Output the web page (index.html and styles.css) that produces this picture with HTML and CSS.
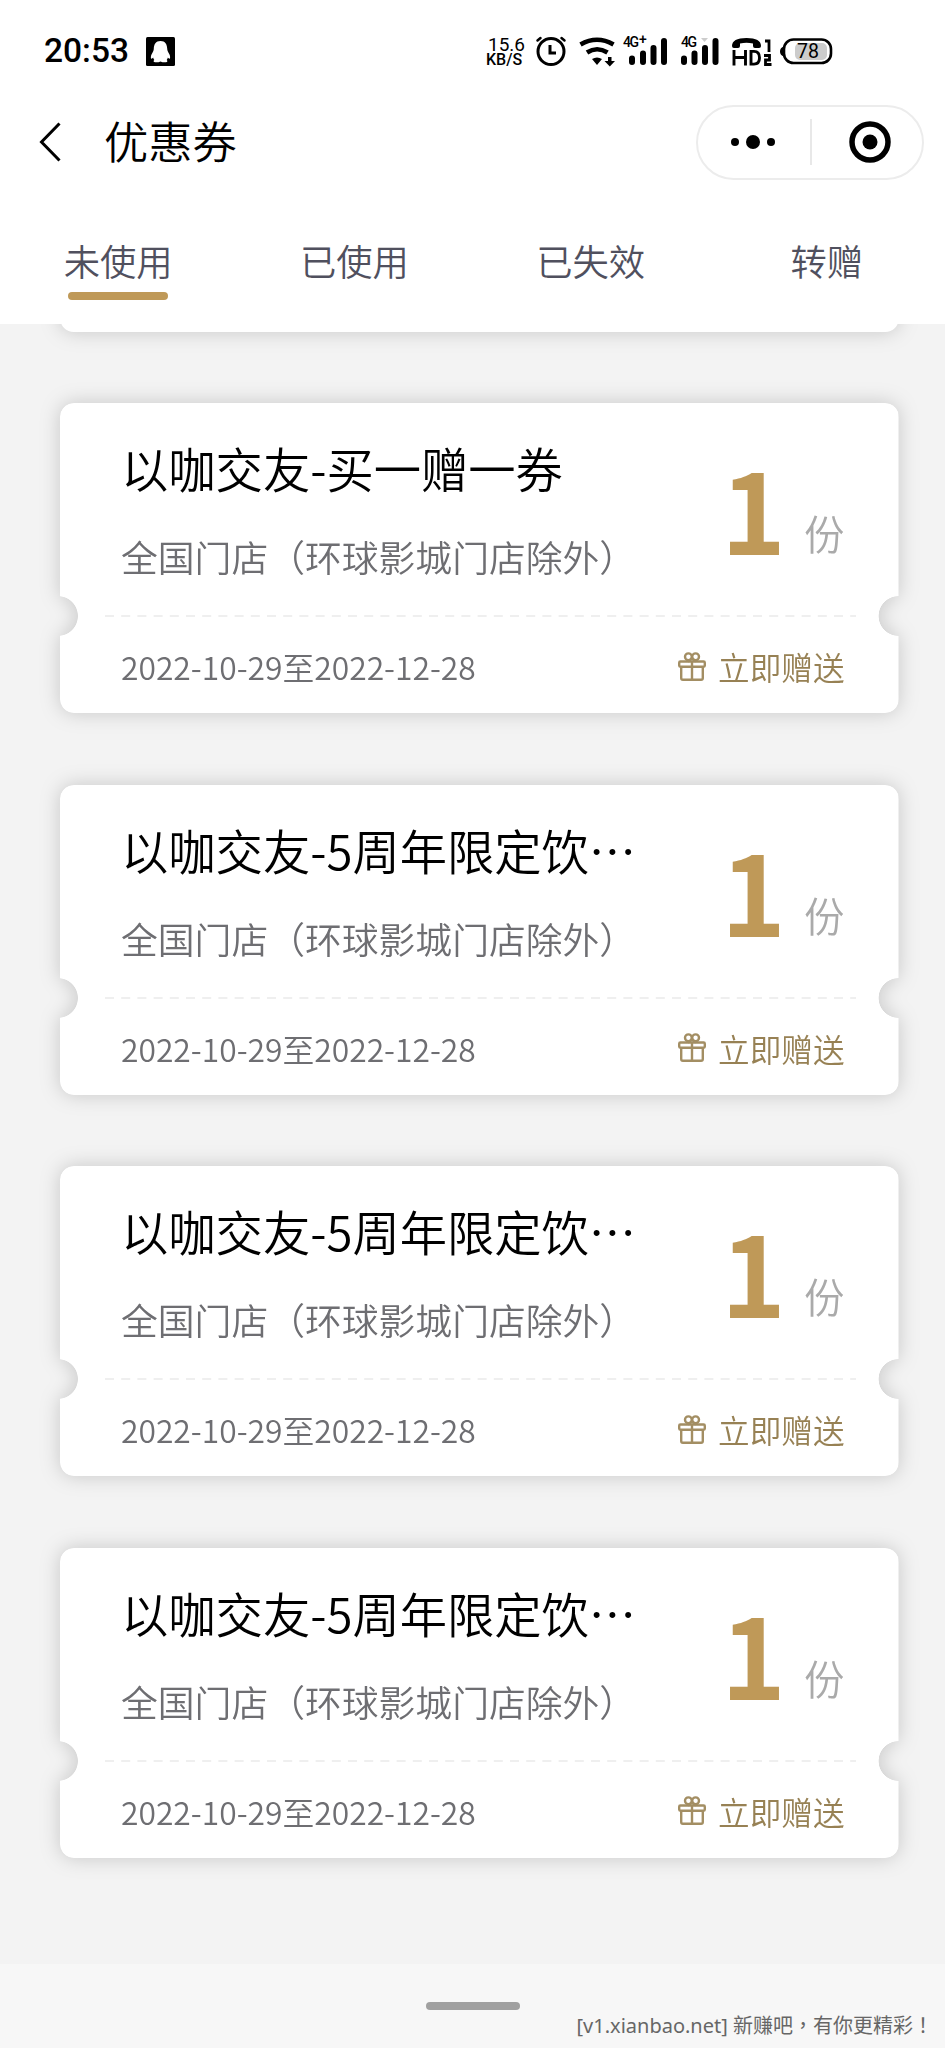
FILE: index.html
```html
<!DOCTYPE html>
<html lang="zh-CN">
<head>
<meta charset="utf-8">
<title>优惠券</title>
<link rel="stylesheet" href="styles.css">
</head>
<body>
<svg class="defs" width="0" height="0" aria-hidden="true">
  <symbol id="gift" viewBox="0 0 28 29">
    <g fill="none" stroke="#a38e63" stroke-width="2.4" stroke-linejoin="round">
      <rect x="1.2" y="9.5" width="25.600" height="5.200" rx="1.200"/>
      <path d="M3.200 14.700V26a1.700 1.700 0 0 0 1.700 1.700h18.200a1.700 1.700 0 0 0 1.700-1.700V14.700M14 9.500v18"/>
      <circle cx="10.400" cy="4.800" r="3.400"/><circle cx="17.600" cy="4.800" r="3.400"/>
      <path d="M10 9.500l4-3 4 3"/>
    </g>
  </symbol>
</svg>
<div class="screen">
  <header class="top">
    <div class="status">
      <span class="time">20:53</span>
      <svg class="qq" width="29" height="29" viewBox="0 0 29 29"><rect width="29" height="29" rx="1.5"/><path fill="#fff" d="M14.500 4c4.800 0 6.500 3.500 6.700 7.500 0 2 .8 3.500 2.300 6 .8 1.700.8 4 .2 4.300-.7.200-1.300-.6-1.800-1.200-.2 1-.6 1.800-1.200 2.500.8.400 1 1.700.2 2-2 .5-4.500.3-6.400-.6-1.900.9-4.400 1.100-6.400.6-.8-.3-.6-1.600.2-2-.6-.7-1-1.500-1.200-2.500-.5.600-1.100 1.400-1.800 1.200-.6-.3-.6-2.600.2-4.300 1.500-2.500 2.300-4 2.300-6C8 7.500 9.700 4 14.500 4z"/></svg>
      <div class="speed"><span class="rate">15.6</span><span class="unit">KB/S</span></div>
      <svg class="icons" width="310" height="50" viewBox="532 26 310 50">
        <g fill="none" stroke="#000" stroke-linecap="round">
          <circle cx="551" cy="51.500" r="13" stroke-width="3"/>
          <path d="M550 45v8h6" stroke-width="3" stroke-linecap="butt"/>
          <path d="M537.500 40.500l3-2.500M564.500 40.500l-3-2.500" stroke-width="2.500"/>
          <path d="M580.500 44.500q16.500-9.500 33 0" stroke-width="4.600" stroke-linecap="butt"/>
          <path d="M587 52.500q10-6.500 20.500 0" stroke-width="4.600" stroke-linecap="butt"/>
          <path d="M632 58.500v3.500M643 53.500v8.500M653.500 48v14M664 41v21" stroke-width="6"/>
          <path d="M684 58.500v3.500M694.500 53.500v8.500M705 48v14M715.500 41v21" stroke-width="6"/>
        </g>
        <path d="M592 59q5-3 10 0l-5 6zM608 57h3.500v4h3.500l-5.200 5.500-5.300-5.500h3.500z"/>
        <path d="M732 46q0-8 14.500-8t14.500 8q0 2-2 2h-4q-2 0-2-2v-2.500q-6.500-1.500-13 0V46q0 2-2 2h-4q-2 0-2-2z"/>
        <path d="M701 38h7l-3.500 4z" fill="#ccc"/>
        <path d="M734 50v15.500M745.500 50v15.500M734 57.500h11.500M751 51.400v12.700h3q5.500 0 5.500-6.300t-5.500-6.400z" fill="none" stroke="#000" stroke-width="2.900"/>
        <path d="M765 41h4v11M764 55.500h5.500v4.500h-4v4.500h6" fill="none" stroke="#000" stroke-width="2.800"/>
        <rect x="784" y="39.500" width="47" height="23.500" rx="9.500" fill="#fff" stroke="#000" stroke-width="2.600"/>
        <path d="M784 46.500q-4 1-4 5t4 5z"/>
        <rect x="795" y="43" width="32" height="17" rx="5" fill="#ccc"/>
        <g class="mini"><text x="623" y="47" textLength="16">4G</text><text x="639" y="44">+</text><text x="681" y="47" textLength="16">4G</text></g>
        <text class="pct" x="797" y="58">78</text>
      </svg>
    </div>
    <div class="nav">
      <svg class="back" width="24" height="42" viewBox="0 0 24 42"><path d="M21.500 2.500L3.500 21l18 18.500" fill="none" stroke="#000" stroke-width="3"/></svg>
      <h1 class="heading">优惠券</h1>
      <div class="capsule">
        <svg class="dots" width="46" height="16" viewBox="0 0 46 16"><circle cx="5" cy="8" r="4"/><circle cx="23" cy="8" r="7"/><circle cx="41" cy="8" r="4"/></svg>
        <i class="split"></i>
        <svg class="target" width="42" height="42" viewBox="0 0 42 42"><circle cx="21" cy="21" r="18" fill="none" stroke="#000" stroke-width="5.500"/><circle cx="21" cy="21" r="7.500"/></svg>
      </div>
    </div>
    <nav class="tabs">
      <a class="tab active">未使用</a><a class="tab">已使用</a><a class="tab">已失效</a><a class="tab">转赠</a>
    </nav>
  </header>
  <main class="list">
    <div class="shade"><div class="tail"></div></div>
    <div class="shade"><article class="card">
      <div class="main"><div class="info"><h2 class="name">以咖交友-买一赠一券</h2><p class="scope">全国门店（环球影城门店除外）</p></div><div class="count"><b class="num">1</b><span class="piece">份</span></div></div>
      <svg class="rule" width="751" height="2"><path d="M0 1h751"/></svg>
      <div class="foot"><span class="date">2022-10-29至2022-12-28</span><a class="send"><svg width="28" height="29"><use href="#gift"/></svg>立即赠送</a></div>
    </article></div>
    <div class="shade"><article class="card">
      <div class="main"><div class="info"><h2 class="name">以咖交友-5周年限定饮…</h2><p class="scope">全国门店（环球影城门店除外）</p></div><div class="count"><b class="num">1</b><span class="piece">份</span></div></div>
      <svg class="rule" width="751" height="2"><path d="M0 1h751"/></svg>
      <div class="foot"><span class="date">2022-10-29至2022-12-28</span><a class="send"><svg width="28" height="29"><use href="#gift"/></svg>立即赠送</a></div>
    </article></div>
    <div class="shade"><article class="card">
      <div class="main"><div class="info"><h2 class="name">以咖交友-5周年限定饮…</h2><p class="scope">全国门店（环球影城门店除外）</p></div><div class="count"><b class="num">1</b><span class="piece">份</span></div></div>
      <svg class="rule" width="751" height="2"><path d="M0 1h751"/></svg>
      <div class="foot"><span class="date">2022-10-29至2022-12-28</span><a class="send"><svg width="28" height="29"><use href="#gift"/></svg>立即赠送</a></div>
    </article></div>
    <div class="shade"><article class="card">
      <div class="main"><div class="info"><h2 class="name">以咖交友-5周年限定饮…</h2><p class="scope">全国门店（环球影城门店除外）</p></div><div class="count"><b class="num">1</b><span class="piece">份</span></div></div>
      <svg class="rule" width="751" height="2"><path d="M0 1h751"/></svg>
      <div class="foot"><span class="date">2022-10-29至2022-12-28</span><a class="send"><svg width="28" height="29"><use href="#gift"/></svg>立即赠送</a></div>
    </article></div>
  </main>
  <footer class="home">
    <div class="handle"></div>
    <p class="credit">[v1.xianbao.net] 新赚吧<span class="mark" lang="zh-TW">，</span>有你更精彩<span class="mark" lang="zh-TW">！</span></p>
  </footer>
</div>
</body>
</html>
```
FILE: styles.css
```css
* { box-sizing: border-box; margin: 0; padding: 0; }
body {
  background: #f3f3f3;
  font-family: "Noto Sans CJK SC", sans-serif;
  font-weight: 350;
}
.defs { display: block; height: 0; }
.screen { width: 945px; height: 2048px; display: flex; flex-direction: column; overflow: hidden; }
.top { height: 324px; background: #fff; position: relative; z-index: 1; flex: none; }

.status { display: flex; height: 102px; align-items: center; padding-left: 44px; }
.time { font: 500 33.500px/40px Roboto, sans-serif; width: 102px; }
.speed { margin-left: 310px; width: 47px; font-family: Roboto, sans-serif; display: flex; flex-direction: column; padding-top: 2px; }
.rate { font-size: 19px; line-height: 15px; font-weight: 400; padding-left: 3px; }
.unit { font-size: 16px; line-height: 15px; font-weight: 500; padding-left: 1px; }
.mini { font: 500 14px Roboto, sans-serif; }
.pct { font: 400 19.500px Roboto, sans-serif; }

.nav { display: flex; height: 80px; align-items: center; padding-left: 38px; }
.heading { font-size: 44.300px; line-height: 56px; font-weight: 350; margin-left: 42px; color: #000; width: 592px; padding-bottom: 4px; }
.capsule { width: 228px; height: 75px; border: 2px solid #ececec; border-radius: 38px; display: flex; align-items: center; padding-left: 32px; }
.split { width: 1.500px; height: 46px; background: #e8e8e8; margin-left: 34px; margin-right: 37px; }

.tabs { display: grid; grid-template-columns: repeat(4, 1fr); height: 142px; padding-top: 51px; }
.tab { display: flex; flex-direction: column; align-items: center; font-size: 36.300px; line-height: 54px; color: #50505e; }
.active::after { content: ""; width: 100px; height: 8px; border-radius: 4px; background: #bf9958; margin-top: 5px; }

.list { flex: none; height: 1640px; padding-left: 60px; display: flex; flex-direction: column; gap: 71.600px; }
.shade { filter: drop-shadow(0 0 10px rgba(0, 0, 0, .18)); width: 838.500px; }
.tail { height: 47.500px; margin-top: -40px; background: #fff; border-radius: 14px; }
.card {
  height: 310px;
  border-radius: 14px;
  background: #fff;
  padding: 0 54px 0 61px;
  -webkit-mask: radial-gradient(circle at -2px 213px, transparent 19.500px, #000 20.200px) left / 50.100% 100% no-repeat, radial-gradient(circle at 100% 213px, transparent 19.500px, #000 20.200px) right / 50% 100% no-repeat;
  mask: radial-gradient(circle at -2px 213px, transparent 19.500px, #000 20.200px) left / 50.100% 100% no-repeat, radial-gradient(circle at 100% 213px, transparent 19.500px, #000 20.200px) right / 50% 100% no-repeat;
}
.main { display: flex; justify-content: space-between; height: 212px; }
.info { padding-top: 30px; }
.name { font-size: 47.300px; line-height: 70px; font-weight: 350; color: #000; white-space: nowrap; }
.scope { font-size: 36.800px; line-height: 54px; color: #6e6e72; white-space: nowrap; margin-top: 26px; }
.count { display: flex; align-items: flex-start; padding-top: 24px; }
.num { font-size: 110px; line-height: 160px; font-weight: 700; color: #bf9958; }
.piece { font-size: 40.500px; line-height: 60px; color: #aaa; margin: 76px 0 0 18px; }
.rule { display: block; margin-left: -16px; fill: none; stroke: #efefef; stroke-width: 2; stroke-dasharray: 9 7.200; }
.foot { display: flex; justify-content: space-between; align-items: center; height: 98px; }
.date { font-size: 31.800px; line-height: 46px; color: #6e6e72; }
.send { display: flex; align-items: center; font-size: 31.600px; line-height: 46px; color: #978154; gap: 12px; }

.home { flex: 1; background: #f7f7f7; display: flex; flex-direction: column; align-items: center; padding-top: 38px; }
.handle { width: 94px; height: 8px; border-radius: 4px; background: #a0a0a0; flex: none; }
.credit { align-self: flex-end; margin: 1px 12px 0 0; font: 400 20px/30px "Noto Sans", "Noto Sans CJK SC", sans-serif; color: #666; white-space: nowrap; }
.mark { font-family: "Noto Sans CJK TC", sans-serif; line-height: 1; }
```
